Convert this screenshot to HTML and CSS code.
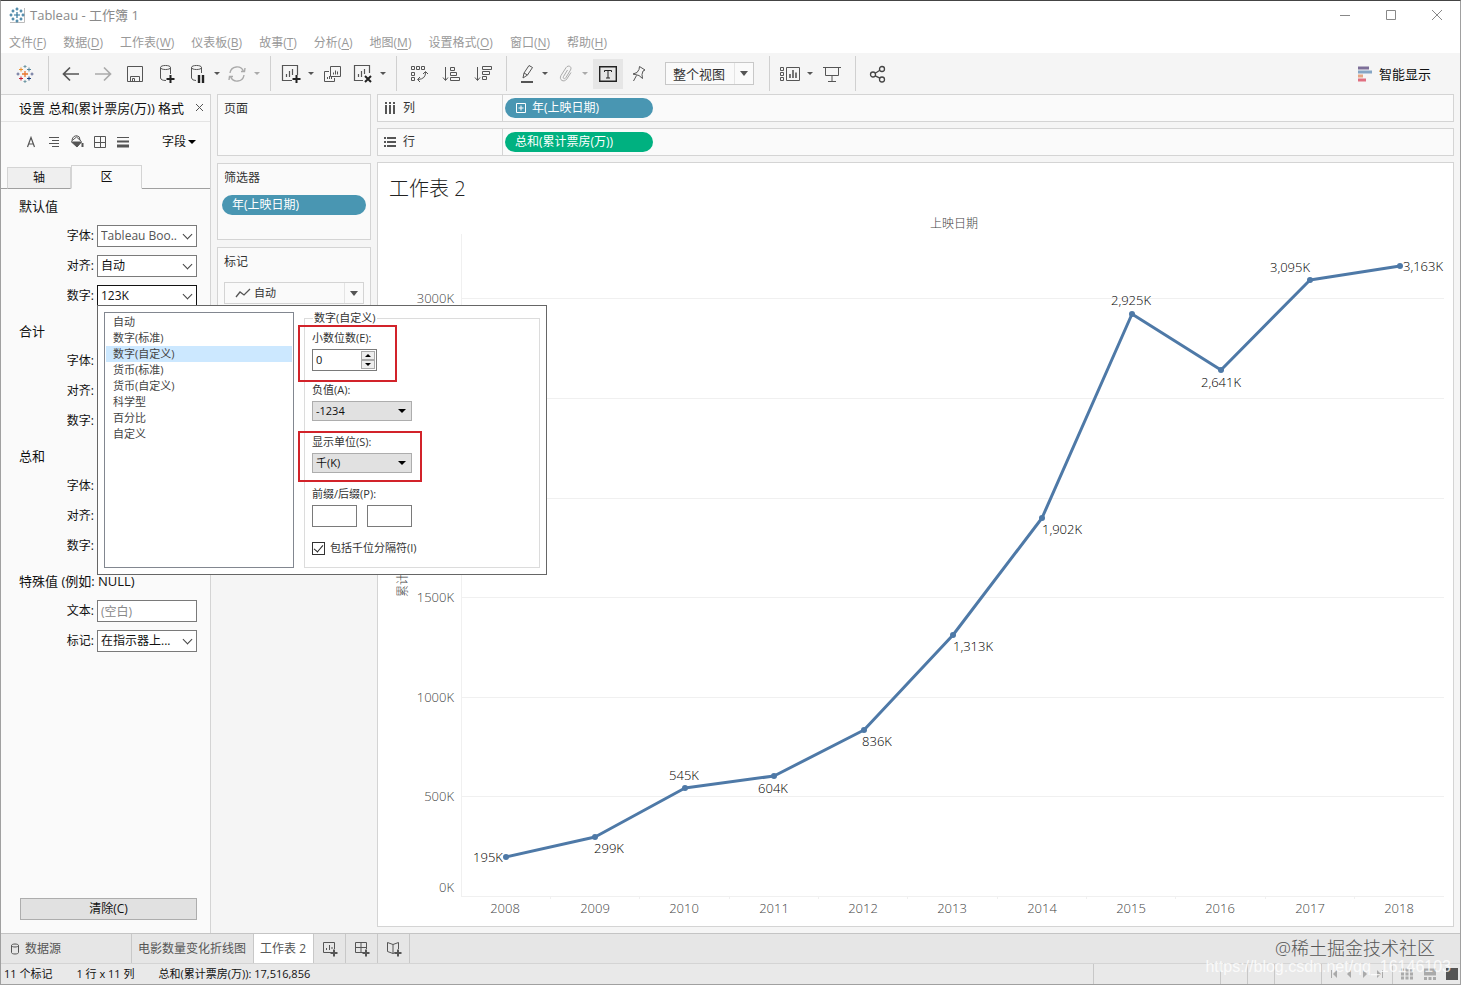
FILE: index.html
```html
<!DOCTYPE html>
<html lang="zh-CN">
<head>
<meta charset="utf-8">
<title>Tableau - 工作簿 1</title>
<link rel="stylesheet" href="styles.css">
</head>
<body>
<div class="window">
  <header class="titlebar">
    <svg class="title-logo" width="16" height="16" viewBox="0 0 16 16"><path d="M15.500 1v14.500H1" fill="none" stroke="#bbb"/><path d="M8 5v6M5 8h6M8 0.500v3M6.500 2h3M8 12.500v3M6.500 14h3M2 6.500v3M.5 8h3M14 6.500v3M12.500 8h3M4 2.500v3M2.500 4h3M12 2.500v3M10.500 4h3M4 10.500v3M2.500 12h3M12 10.500v3M10.500 12h3" fill="none" stroke="#2d7399" stroke-width="1.200"/></svg>
    <span class="title-text">Tableau - 工作簿 1</span>
    <div class="window-buttons">
      <button type="button" aria-label="最小化"><svg width="12" height="12"><path d="M1 6.500h10"/></svg></button>
      <button type="button" aria-label="最大化"><svg width="12" height="12"><path d="M1.500 1.500h9v9h-9z"/></svg></button>
      <button type="button" aria-label="关闭"><svg width="12" height="12"><path d="M1 1l10 10M11 1L1 11"/></svg></button>
    </div>
  </header>

  <nav class="menubar">
    <a href="#">文件(<u>F</u>)</a><a href="#">数据(<u>D</u>)</a><a href="#">工作表(<u>W</u>)</a><a href="#">仪表板(<u>B</u>)</a><a href="#">故事(<u>T</u>)</a><a href="#">分析(<u>A</u>)</a><a href="#">地图(<u>M</u>)</a><a href="#">设置格式(<u>O</u>)</a><a href="#">窗口(<u>N</u>)</a><a href="#">帮助(<u>H</u>)</a>
  </nav>

  <div class="toolbar">
    <button type="button" class="tool tool-logo" aria-label="Tableau">
      <svg width="18" height="18" viewBox="0 0 18 18"><path d="M9 6v6M6 9h6" stroke="#e8762d" stroke-width="1.300"/><path d="M5 2.500v4M3 4.500h4" stroke="#eb912c"/><path d="M13 2.500v4M11 4.500h4" stroke="#59879b"/><path d="M5 11.500v4M3 13.500h4" stroke="#c72035"/><path d="M13 11.500v4M11 13.500h4" stroke="#1f447e"/><path d="M9 0v3M7.500 1.500h3M9 15v3M7.500 16.500h3" stroke="#7099a5"/><path d="M2 7.500v3M.5 9h3" stroke="#5c6692"/><path d="M16 7.500v3M14.500 9h3" stroke="#5c6692"/></svg>
    </button>
    <i class="sep"></i>
    <button type="button" class="tool" aria-label="后退"><svg width="18" height="18"><path d="M17 9H2M8 2.500L1.500 9L8 15.500" stroke="#555" stroke-width="1.700"/></svg></button>
    <button type="button" class="tool" aria-label="前进"><svg width="18" height="18"><path d="M1 9h15M10 2.500L16.500 9L10 15.500" stroke="#aaa" stroke-width="1.700"/></svg></button>
    <button type="button" class="tool" aria-label="保存"><svg width="18" height="18"><path d="M1.500 1.500h15v15h-15zM4.500 16.500v-5h9v5M6.500 16.500v-3h2v3"/></svg></button>
    <button type="button" class="tool" aria-label="新建数据源"><svg width="18" height="20"><path d="M2.500 3.500C2.500 .8 12.500 .8 12.500 3.500S2.500 6.200 2.500 3.500V14Q3 16.500 8 16.500M12.500 3.500V10"/><path d="M12.500 11v8M8.500 15h8" stroke="#222" stroke-width="2"/></svg></button>
    <button type="button" class="tool narrow" aria-label="暂停自动更新"><svg width="18" height="20"><path d="M3.500 3.500C3.500 .8 13.500 .8 13.500 3.500S3.500 6.200 3.500 3.500V14Q4 16.500 8 16.500M13.500 3.500V9"/><path d="M11 11v8M15 11v8" stroke="#222" stroke-width="2.400"/></svg></button>
    <button type="button" class="caret" aria-label="更多"></button>
    <button type="button" class="tool narrow" aria-label="刷新"><svg width="18" height="18"><path d="M2 8A7 7 0 0 1 15.500 6.500M16 10A7 7 0 0 1 2.500 11.500M13 6.500h3.500l.5-3.500M5 11.500H1.500L1 15" stroke="#aaa" stroke-width="1.400"/></svg></button>
    <button type="button" class="caret pale" aria-label="更多"></button>
    <i class="sep"></i>
    <button type="button" class="tool narrow" aria-label="新建工作表"><svg width="20" height="20"><path d="M11 16.500H1.500v-15h15V11M5.500 13v-3M8.500 13V7M11.500 11V5" stroke-width="1.200"/><path d="M15.500 11v8M11.500 15h8" stroke="#222" stroke-width="2"/></svg></button>
    <button type="button" class="caret" aria-label="更多"></button>
    <button type="button" class="tool" aria-label="复制"><svg width="18" height="18"><path d="M6.500 1.500h10v10h-10zM5 6.500H.5v10h10V13M9.500 9.500v-2M11.500 9.500v-4M13.500 9.500v-3M3.500 14v-2M5.500 14v-3M7.500 14v-2"/></svg></button>
    <button type="button" class="tool narrow" aria-label="清除"><svg width="20" height="20"><path d="M10 16.500H1.500v-15h15V9M5.500 13v-3M8.500 13V7M11.500 10V5" stroke-width="1.200"/><path d="M12 12l6 6M18 12l-6 6" stroke="#222" stroke-width="2"/></svg></button>
    <button type="button" class="caret" aria-label="更多"></button>
    <i class="sep"></i>
    <button type="button" class="tool" aria-label="交换行和列"><svg width="18" height="18"><path d="M1.500 1.500h3v3h-3zM6.500 1.500h3v3h-3zM11.500 1.500h3v3h-3zM1.500 7.500h3v3h-3zM1.500 12.500h3v3h-3zM15.500 7Q16 14 8 14.500M13 9l2.500-2.500L18 9M10 12l-2.500 2.500L10 17"/></svg></button>
    <button type="button" class="tool" aria-label="升序排序"><svg width="18" height="18"><path d="M3.500 2v13M1 12.500l2.500 3 2.500-3M8.500 2.500h4v3h-4zM8.500 7.500h6v3h-6zM8.500 12.500h9v3h-9z"/></svg></button>
    <button type="button" class="tool" aria-label="降序排序"><svg width="18" height="18"><path d="M3.500 2v13M1 12.500l2.500 3 2.500-3M8.500 1.500h9v3h-9zM8.500 6.500h7v3h-7zM8.500 11.500h4v3h-4z"/></svg></button>
    <i class="sep"></i>
    <button type="button" class="tool small" aria-label="突出显示"><svg width="16" height="20"><path d="M5 14l1-5L11 1.500l3.500 2L9.500 11 5 14zM6 9l3.500 2"/><path d="M3 18h12" stroke-width="2"/></svg></button>
    <button type="button" class="caret" aria-label="更多"></button>
    <button type="button" class="tool small" aria-label="组成员"><svg width="14" height="18"><path d="M8.500 5L4.500 11.500c-1 2 1.200 3 2.300 1.300L11.500 5c2-3.500-2.500-5.500-4.500-2.300L2 10.500c-2.500 4.500 3 7.500 5.800 3.500L12 7.500" stroke="#aaa"/></svg></button>
    <button type="button" class="caret pale" aria-label="更多"></button>
    <button type="button" class="tool pressed" aria-label="显示标记标签"><svg width="18" height="18"><path d="M.7 1.700h16.600v14.600H.7z" stroke="#222" stroke-width="1.400"/><path d="M5.500 7V5.500h7V7M9 5.500v7.500M7 13h4" stroke="#222"/></svg></button>
    <button type="button" class="tool" aria-label="固定轴"><svg width="16" height="18"><path d="M8.500 1.500l5.500 3.500-2 1-1 3.500 .5 4-3.500-3-6-1.500 4-1.500 2-3zM5.500 10.500L2.500 16"/></svg></button>
    <label class="fit"><select aria-label="适合"><option>整个视图</option></select></label>
    <i class="sep"></i>
    <button type="button" class="tool narrow" aria-label="显示卡"><svg width="22" height="18"><path d="M1.500 2.500h3v3h-3zM1.500 7.500h3v3h-3zM1.500 12.500h3v3h-3zM7.500 2.500h13v13h-13z"/><path d="M11 13V9M14 13V5M17 13V7.500" stroke-width="1.600"/></svg></button>
    <button type="button" class="caret" aria-label="更多"></button>
    <button type="button" class="tool" aria-label="演示模式"><svg width="18" height="18"><path d="M0 2.500h18M2.500 2.500v8h13v-8M9 10.500v6M5 16.500h8"/></svg></button>
    <i class="sep"></i>
    <button type="button" class="tool" aria-label="共享"><svg width="18" height="18"><g stroke="#444" stroke-width="1.300"><circle cx="4" cy="9.500" r="2.500"/><circle cx="13" cy="4" r="2.500"/><circle cx="13" cy="14.500" r="2.500"/><path d="M6.200 8.200l4.700-2.900M6.200 10.800l4.700 2.400"/></g></svg></button>
    <button type="button" class="show-me"><svg width="14" height="16"><path d="M0 2h11" stroke="#7d6f98" stroke-width="3"/><path d="M0 6h14" stroke="#85a5c4" stroke-width="3"/><path d="M0 10h5" stroke="#e5a582" stroke-width="3"/><path d="M0 14h8" stroke="#e06f80" stroke-width="3"/></svg>智能显示</button>
  </div>

  <main class="workspace">
    <aside class="format">
      <header class="format-head"><h2>设置 总和(累计票房(万)) 格式</h2><button type="button" aria-label="关闭"><svg width="9" height="9"><path d="M1 1l7 7M8 1L1 8"/></svg></button></header>
      <div class="format-tools">
        <button type="button" aria-label="字体"><svg width="12" height="12"><path d="M2.500 11L6 1.500L9.500 11M3.500 8h5" stroke-width="1.200"/></svg></button>
        <button type="button" aria-label="对齐"><svg width="12" height="12"><path d="M1 1.500h10M4 4.500h7M1 7.500h10M4 10.500h7"/></svg></button>
        <button type="button" aria-label="阴影"><svg width="14" height="14"><path d="M1.500 7h10L7 12z" fill="#555"/><path d="M1 6.500L6.500 2l5 4.500M2 5Q3 .5 7 .8Q10 1 10 5"/><path d="M12.500 8v4" stroke-width="2"/></svg></button>
        <button type="button" aria-label="边界"><svg width="12" height="12"><path d="M.5.5h11v11H.5zM6.500 1v11M0 6.500h12"/></svg></button>
        <button type="button" aria-label="线"><svg width="12" height="12"><path d="M0 1.500h12"/><path d="M0 5.500h12" stroke-width="2"/><path d="M0 10h12" stroke-width="3"/></svg></button>
        <button type="button" class="field-menu">字段</button>
      </div>
      <div class="tabs"><button type="button">轴</button><button type="button" class="on">区</button></div>

      <section class="group">
        <h3>默认值</h3>
        <div class="row"><label for="f1">字体:</label><span class="drop"><select id="f1" class="soft"><option>Tableau Boo..</option></select></span></div>
        <div class="row"><label for="a1">对齐:</label><span class="drop"><select id="a1"><option>自动</option></select></span></div>
        <div class="row"><label for="n1">数字:</label><span class="drop open"><select id="n1"><option>123K</option></select>
          <div class="popup">
            <ul class="list" role="listbox" aria-label="数字格式">
              <li role="option">自动</li><li role="option">数字(标准)</li><li role="option" class="on" aria-selected="true">数字(自定义)</li><li role="option">货币(标准)</li><li role="option">货币(自定义)</li><li role="option">科学型</li><li role="option">百分比</li><li role="option">自定义</li>
            </ul>
            <fieldset>
              <legend>数字(自定义)</legend>
              <div class="option marked"><label for="dec">小数位数(E):</label>
                <span class="spinner"><input id="dec" type="text" value="0"><span class="steps"><button type="button" aria-label="增加"></button><button type="button" class="down" aria-label="减少"></button></span></span>
              </div>
              <div class="option"><label for="neg">负值(A):</label><span class="gray-drop"><select id="neg"><option>-1234</option></select></span></div>
              <div class="option marked wide"><label for="unit">显示单位(S):</label><span class="gray-drop"><select id="unit"><option>千(K)</option></select></span></div>
              <div class="option"><label for="pre">前缀/后缀(P):</label><span class="pair"><input id="pre" type="text"><input type="text" aria-label="后缀"></span></div>
              <label class="check"><input type="checkbox" checked>包括千位分隔符(I)</label>
            </fieldset>
          </div></span></div>
      </section>
      <section class="group">
        <h3>合计</h3>
        <div class="row"><label for="f2">字体:</label><span class="drop"><select id="f2"></select></span></div>
        <div class="row"><label for="a2">对齐:</label><span class="drop"><select id="a2"></select></span></div>
        <div class="row"><label for="n2">数字:</label><span class="drop"><select id="n2"></select></span></div>
      </section>
      <section class="group">
        <h3>总和</h3>
        <div class="row"><label for="f3">字体:</label><span class="drop"><select id="f3"></select></span></div>
        <div class="row"><label for="a3">对齐:</label><span class="drop"><select id="a3"></select></span></div>
        <div class="row"><label for="n3">数字:</label><span class="drop"><select id="n3"></select></span></div>
      </section>
      <section class="group">
        <h3>特殊值 (例如: NULL)</h3>
        <div class="row"><label for="t4">文本:</label><input id="t4" type="text" placeholder="(空白)"></div>
        <div class="row"><label for="m4">标记:</label><span class="drop"><select id="m4"><option>在指示器上...</option></select></span></div>
      </section>
      <button type="button" class="clear">清除(C)</button>
    </aside>

    <div class="cards">
      <section class="card pages"><h2>页面</h2></section>
      <section class="card filters"><h2>筛选器</h2><button type="button" class="pill">年(上映日期)</button></section>
      <section class="card marks"><h2>标记</h2><label class="mark-type"><svg width="16" height="10"><path d="M1 9l4-5 4 3 6-6" fill="none" stroke="#555" stroke-width="1.300"/></svg><select aria-label="标记类型"><option>自动</option></select></label></section>
    </div>

    <div class="sheet">
      <div class="shelf"><div class="shelf-name"><svg width="12" height="12"><path d="M2 0v2M6 0v2M10 0v2M2 3v9M6 3v9M10 3v9" stroke-width="2"/></svg>列</div><button type="button" class="pill"><svg width="10" height="10"><path d="M.5.5h9v9h-9zM5 2.500v5M2.500 5h5" fill="none" stroke="#fff"/></svg>年(上映日期)</button></div>
      <div class="shelf"><div class="shelf-name"><svg width="12" height="12"><path d="M0 2h2M0 6h2M0 10h2M3 2h9M3 6h9M3 10h9" stroke-width="2"/></svg>行</div><button type="button" class="pill green">总和(累计票房(万))</button></div>
      <section class="view">
        <h1>工作表 2</h1>
        <svg class="chart" viewBox="378 205 1075 721" role="img" aria-label="累计票房(万)">
          <path class="grid" d="M461.500 234V896M461 298.500H1444M461 398.500H1444M461 498.500H1444M461 597.500H1444M461 697.500H1444M461 796.500H1444M461 896.500H1444M550.500 896v3M639.500 896v3M729.500 896v3M818.500 896v3M907.500 896v3M997.500 896v3M1086.500 896v3M1175.500 896v3M1265.500 896v3M1354.500 896v3"/>
          <text class="head" x="954" y="228" text-anchor="middle">上映日期</text>
          <text class="head" transform="translate(407 597) rotate(-90)">累计票房(万)</text>
          <g class="axis" text-anchor="end">
            <text x="454" y="303">3000K</text><text x="454" y="403">2500K</text><text x="454" y="503">2000K</text><text x="454" y="602">1500K</text><text x="454" y="702">1000K</text><text x="454" y="801">500K</text><text x="454" y="892">0K</text>
          </g>
          <g class="years" text-anchor="middle">
            <text x="505" y="913">2008</text><text x="595" y="913">2009</text><text x="684" y="913">2010</text><text x="774" y="913">2011</text><text x="863" y="913">2012</text><text x="952" y="913">2013</text><text x="1042" y="913">2014</text><text x="1131" y="913">2015</text><text x="1220" y="913">2016</text><text x="1310" y="913">2017</text><text x="1399" y="913">2018</text>
          </g>
          <polyline class="line" points="506,857 595,837 685,788 774,776 864,730 953,635 1042,518 1132,314 1221,370 1310,280 1400,266"/>
          <g class="dots"><circle cx="506" cy="857" r="3"/><circle cx="595" cy="837" r="3"/><circle cx="685" cy="788" r="3"/><circle cx="774" cy="776" r="3"/><circle cx="864" cy="730" r="3"/><circle cx="953" cy="635" r="3"/><circle cx="1042" cy="518" r="3"/><circle cx="1132" cy="314" r="3"/><circle cx="1221" cy="370" r="3"/><circle cx="1310" cy="280" r="3"/><circle cx="1400" cy="266" r="3"/></g>
          <g class="values" text-anchor="middle">
            <text x="488" y="862">195K</text><text x="609" y="853">299K</text><text x="684" y="780">545K</text><text x="773" y="793">604K</text><text x="877" y="746">836K</text><text x="973" y="651">1,313K</text><text x="1062" y="534">1,902K</text><text x="1131" y="305">2,925K</text><text x="1221" y="387">2,641K</text><text x="1290" y="272">3,095K</text><text x="1423" y="271">3,163K</text>
          </g>
        </svg>
      </section>
    </div>
  </main>

  <nav class="sheets">
    <button type="button" class="source"><svg width="10" height="12"><path d="M1.500 2.500C1.500 .5 8.500 .5 8.500 2.500V9.500C8.500 11.500 1.500 11.500 1.500 9.500zM1.500 2.500C1.500 4.500 8.500 4.500 8.500 2.500"/></svg>数据源</button>
    <button type="button">电影数量变化折线图</button>
    <button type="button" class="on">工作表 2</button>
    <button type="button" class="add" aria-label="新建工作表"><svg width="16" height="16"><path d="M9 11.500H1.500v-10h11V8M4.500 9V7M7.500 9V4M10 8V6"/><path d="M12 8.500v7M8.500 12h7" stroke-width="2"/></svg></button>
    <button type="button" class="add" aria-label="新建仪表板"><svg width="16" height="16"><path d="M9 11.500H1.500v-10h11V8M7 1.500v10M1.500 6.500h11"/><path d="M12 8.500v7M8.500 12h7" stroke-width="2"/></svg></button>
    <button type="button" class="add" aria-label="新建故事"><svg width="16" height="16"><path d="M7 3.500L1.500 1.500v9L7 12.500M7 3.500l5.500-2V8M7 3.500v9l2-.8"/><path d="M12 8.500v7M8.500 12h7" stroke-width="2"/></svg></button>
  </nav>

  <footer class="status">
    <span>11 个标记</span><span>1 行 x 11 列</span><span>总和(累计票房(万)): 17,516,856</span>
    <div class="cells">
      <i class="w127"></i><i class="w27"></i><i class="w27"></i><i class="w47"></i>
      <div class="pager">
        <button type="button" aria-label="第一个"><svg width="8" height="8"><path d="M1.500 0v8" stroke="#aaa"/><path d="M7 0v8L3 4z" fill="#aaa" stroke="none"/></svg></button>
        <button type="button" aria-label="上一个"><svg width="8" height="8"><path d="M6 0v8L2 4z" fill="#aaa" stroke="none"/></svg></button>
        <button type="button" aria-label="下一个"><svg width="8" height="8"><path d="M2 0v8l4-4z" fill="#aaa" stroke="none"/></svg></button>
        <button type="button" aria-label="最后一个"><svg width="8" height="8"><path d="M6.500 0v8" stroke="#aaa"/><path d="M1 0v8l4-4z" fill="#aaa" stroke="none"/></svg></button>
      </div>
      <div class="modes">
        <button type="button" aria-label="工作表排序程序"><svg width="12" height="12"><path d="M0 2h12M0 6h12M0 10h12" stroke="#aaa" stroke-width="3" stroke-dasharray="3 1.500"/></svg></button>
        <button type="button" aria-label="胶片"><svg width="12" height="12"><path d="M0 4h12" stroke="#aaa" stroke-width="7"/><path d="M0 10.500h12" stroke="#aaa" stroke-width="3" stroke-dasharray="3 1.500"/></svg></button>
        <button type="button" aria-label="选项卡"><svg width="12" height="12"><path d="M0 0h12v12H0z" fill="#555" stroke="none"/></svg></button>
      </div>
    </div>
  </footer>
  <div class="credit">@稀土掘金技术社区</div>
  <div class="credit-url">https://blog.csdn.net/qq_16146103</div>
</div>
</body>
</html>
```
FILE: styles.css
```css
*, ::before, ::after { box-sizing: border-box; }
body { margin: 0; font: 12px/16px "Open Sans", "Noto Sans CJK SC", sans-serif; color: #111; background: #f5f5f5; }
h1, h2, h3, ul { margin: 0; padding: 0; font-weight: 400; }
button, select, input { font: inherit; color: inherit; margin: 0; border-radius: 0; }
button { border: 0; background: none; padding: 0; }
svg { display: block; flex: none; }
button svg, .shelf-name svg { fill: none; stroke: #555; }
select { appearance: none; }
i { display: block; }

.window { position: relative; display: flex; flex-direction: column; min-height: 100vh; border: 1px solid #a0a0a0; border-top-color: #444; }
.titlebar { display: flex; align-items: center; height: 29px; padding: 0 0 2px 8px; background: #fff; color: #8a8a8a; font-size: 13px; }
.title-text { margin-left: 5px; }
.window-buttons { display: flex; margin-left: auto; }
.window-buttons button { display: flex; justify-content: center; width: 46px; }
.window-buttons svg { stroke: #888; }
.menubar { display: flex; gap: 17px; height: 23px; padding: 5px 8px 0; background: #fff; }
.menubar a { color: #999; text-decoration: none; white-space: nowrap; }
.menubar u { text-underline-offset: 2px; }

.toolbar { display: flex; align-items: center; height: 41px; background: #f5f5f5; }
.tool { display: flex; align-items: center; justify-content: center; width: 32px; height: 30px; }
.tool.narrow { width: 28px; }
.tool.small { width: 26px; }
.tool-logo { width: 47px; }
.tool.pressed { width: 30px; background: #e6e6e6; }
.sep { width: 1px; height: 35px; margin: 0 6px 0 7px; background: #d0d0d0; }
.tool-logo + .sep { margin-left: 0; }
.caret { display: flex; justify-content: center; width: 12px; height: 20px; align-items: center; }
.caret::after, .fit::after, .mark-type::after, .field-menu::after, .gray-drop::after { content: ""; width: 0; height: 0; border: 3px solid transparent; border-top: 3px solid #555; border-bottom: 0; }
.caret.pale::after { border-top-color: #aaa; }
.tool.small + .caret { margin: 0 2px 0 0; }
.fit { display: flex; align-items: center; width: 89px; height: 23px; margin: 0 8px 0 10px; border: 1px solid #c8c8c8; font-size: 13px; background: #fafafa; }
.fit select { flex: 1; min-width: 0; height: 21px; margin-right: 5px; padding: 0 0 0 7px; border: 0; border-right: 1px solid #e4e4e4; background: none; color: #333; }
.fit::after { margin-right: 5px; border-width: 4px; border-top-width: 5px; border-bottom-width: 0; }
.show-me { display: flex; align-items: center; gap: 7px; margin-left: auto; padding-right: 29px; font-size: 13px; }

.workspace { flex: 1; display: flex; gap: 6px; padding-right: 6px; background: #f5f5f5; }
.format { display: flex; flex-direction: column; width: 210px; padding-bottom: 13px; background: #fafafa; border: solid #d4d4d4; border-width: 1px 1px 0 0; }
.format-head { display: flex; align-items: center; height: 27px; padding-left: 18px; border-bottom: 1px solid #e4e4e4; }
.format-head h2 { font-size: 13px; white-space: nowrap; }
.format-head button { margin: 0 6px 2px auto; }
.format-tools { display: flex; align-items: center; height: 43px; padding: 0 0 3px 18px; }
.format-tools button { display: flex; justify-content: center; width: 23px; }
.format-tools .field-menu { align-items: center; gap: 2px; width: auto; margin: 0 14px 0 auto; font-size: 12px; }
.field-menu::after, .gray-drop::after { border-width: 4px; border-top: 4px solid #000; border-bottom: 0; }
.tabs { display: flex; align-items: flex-end; height: 24px; padding-left: 6px; box-shadow: inset 0 -1px #a0a0a0; }
.tabs button { width: 64px; height: 22px; border: 1px solid #d4d4d4; border-bottom-color: #a0a0a0; background: #efefef; }
.tabs .on { width: 71px; height: 24px; border-bottom-color: #fafafa; background: #fafafa; }
.group { padding-bottom: 3px; }
.group h3 { height: 32px; padding: 9px 0 0 18px; font-size: 13px; }
.row { display: flex; align-items: center; justify-content: flex-end; gap: 3px; height: 30px; padding-right: 13px; }
.row > input { width: 100px; height: 22px; padding: 0 3px; border: 1px solid #7a7a7a; background: #fff; }
.row > input::placeholder { color: #888; }
.drop { position: relative; width: 100px; height: 22px; }
.drop > select { display: block; width: 100%; height: 22px; padding: 0 18px 0 3px; border: 1px solid #7a7a7a; background: #fff; }
.drop > .soft { padding-right: 14px; color: #555; }
.drop.open > select { border-color: #111; }
.drop::after { content: ""; position: absolute; right: 6px; top: 6px; width: 7px; height: 7px; border: solid #444; border-width: 0 1px 1px 0; transform: rotate(45deg); }
.clear { height: 22px; margin: auto 13px 0 19px; border: 1px solid #adadad; background: #e1e1e1; }

.popup { position: absolute; z-index: 5; top: 20px; left: 0; display: flex; gap: 10px; width: 450px; height: 270px; padding: 6px; border: 1px solid #666; background: #fff; font-size: 11px; line-height: 16px; color: #333; }
.list { width: 190px; padding: 1px; border: 1px solid #828790; list-style: none; color: #444; }
.list li { padding-left: 7px; }
.list .on { background: #cce8ff; }
.popup fieldset { flex: 1; margin: 0; padding: 6px 7px 0; border: 1px solid #dcdcdc; }
.popup legend { height: 12px; padding: 0 1px; line-height: 12px; margin-left: 1px; }
.option { position: relative; display: flex; flex-direction: column; gap: 3px; height: 41px; margin-bottom: 11px; }
.marked::before { content: ""; position: absolute; left: -14px; top: -5px; width: 99px; height: 57px; border: 2px solid #d2232a; pointer-events: none; }
.marked.wide::before { top: -3px; width: 124px; height: 51px; }
.spinner { display: flex; width: 65px; height: 22px; padding: 1px; border: 1px solid #7a7a7a; color: #111; }
.spinner input { flex: 1; min-width: 0; border: 0; padding: 0 2px; background: none; }
.steps { display: flex; flex-direction: column; width: 14px; }
.steps button { flex: 1; display: flex; align-items: center; justify-content: center; border: 1px solid #aaa; background: #eee; }
.steps button::after { content: ""; width: 0; height: 0; border: 3px solid transparent; border-bottom: 3px solid #000; border-top: 0; }
.steps .down::after { border-top: 3px solid #000; border-bottom: 0; }
.gray-drop { display: flex; align-items: center; width: 100px; height: 20px; padding-right: 5px; border: 1px solid #adadad; background: #e1e1e1; color: #111; }
.gray-drop select { flex: 1; min-width: 0; height: 18px; padding: 0 3px; border: 0; background: none; }
.pair { display: flex; gap: 10px; }
.pair input { width: 45px; height: 22px; border: 1px solid #7a7a7a; }
.check { display: flex; align-items: center; gap: 5px; height: 20px; }
.check input { appearance: none; display: flex; justify-content: center; width: 13px; height: 13px; border: 1px solid #333; background: #fff; }
.check input:checked::after { content: ""; width: 5px; height: 9px; border: solid #222; border-width: 0 1px 1px 0; transform: rotate(40deg); }

.cards { display: flex; flex-direction: column; gap: 7px; width: 154px; }
.card { padding: 6px 4px; border: 1px solid #d4d4d4; background: #fafafa; color: #333; }
.card h2 { padding-left: 2px; font-size: 12px; line-height: 16px; }
.pages { height: 62px; }
.filters { height: 77px; }
.marks { height: 240px; }
.pill { display: flex; align-items: center; gap: 6px; width: 148px; height: 20px; padding: 0 10px; border-radius: 10px; background: #4996b2; color: #fff; white-space: nowrap; }
.pill.green { background: #00b180; }
.filters .pill { width: 144px; margin-top: 9px; }
.mark-type { display: flex; align-items: center; width: 140px; height: 22px; margin: 12px 0 0 2px; padding-left: 10px; border: 1px solid #d4d4d4; }
.mark-type select { flex: 1; min-width: 0; height: 20px; padding: 0 3px; border: 0; border-right: 1px solid #e4e4e4; background: none; font-size: 11px; }
.mark-type::after { margin: 0 5px; border-width: 4px; border-top-width: 5px; border-bottom-width: 0; }

.sheet { flex: 1; min-width: 0; display: flex; flex-direction: column; gap: 6px; padding-bottom: 6px; }
.shelf { display: flex; align-items: center; gap: 2px; height: 28px; border: 1px solid #d4d4d4; background: #fafafa; }
.shelf-name { display: flex; align-items: center; align-self: stretch; gap: 7px; width: 125px; padding-left: 6px; border-right: 1px solid #d4d4d4; color: #333; }
.shelf .pill svg { margin-left: 1px; }
.view { flex: 1; display: flex; flex-direction: column; border: 1px solid #d4d4d4; background: #fff; }
.view h1 { height: 42px; padding: 13px 11px 0; font-size: 20px; font-weight: 300; line-height: 26px; color: #222; }
.chart { flex: 1; width: 100%; min-height: 0; }
.chart text { font-weight: 300; }
.grid { fill: none; stroke: #f0f0f0; }
.line { fill: none; stroke: #4e79a7; stroke-width: 3; stroke-linejoin: round; }
.dots { fill: #4e79a7; }
.head { font-size: 12px; fill: #444; }
.axis { font-size: 13px; fill: #444; }
.years { font-size: 13px; fill: #444; }
.values { font-size: 13px; fill: #000; }

.sheets { display: flex; height: 30px; border-top: 1px solid #c4c4c4; background: #e6e6e6; }
.sheets button { padding: 0 7px 0 6px; border-right: 1px solid #c8c8c8; color: #555; white-space: nowrap; }
.sheets .source { display: flex; align-items: center; gap: 5px; width: 131px; padding-left: 9px; }
.sheets .on { background: #fff; }
.sheets .add { display: flex; align-items: center; justify-content: center; width: 32px; padding: 0; }
.status { display: flex; align-items: center; gap: 24px; height: 21px; padding-left: 3px; border-top: 1px solid #d4d4d4; background: #e9e9e9; font-size: 11px; }
.cells { display: flex; align-self: stretch; margin-left: auto; border-left: 1px solid #c8c8c8; }
.cells i { border-right: 1px solid #c8c8c8; }
.w127 { width: 127px; }
.w27 { width: 27px; }
.w47 { width: 47px; }
.pager { display: flex; align-items: center; justify-content: space-evenly; width: 71px; border-right: 1px solid #c8c8c8; }
.modes { display: flex; align-items: center; justify-content: space-between; width: 67px; padding: 0 2px 0 8px; }
.credit { position: absolute; right: 25px; bottom: 24px; font-size: 18px; line-height: 24px; font-weight: 300; color: #555; }
.credit-url { position: absolute; right: 9px; bottom: 7px; font: 16px/20px "Liberation Sans", sans-serif; color: rgba(255, 255, 255, .8); }
```
